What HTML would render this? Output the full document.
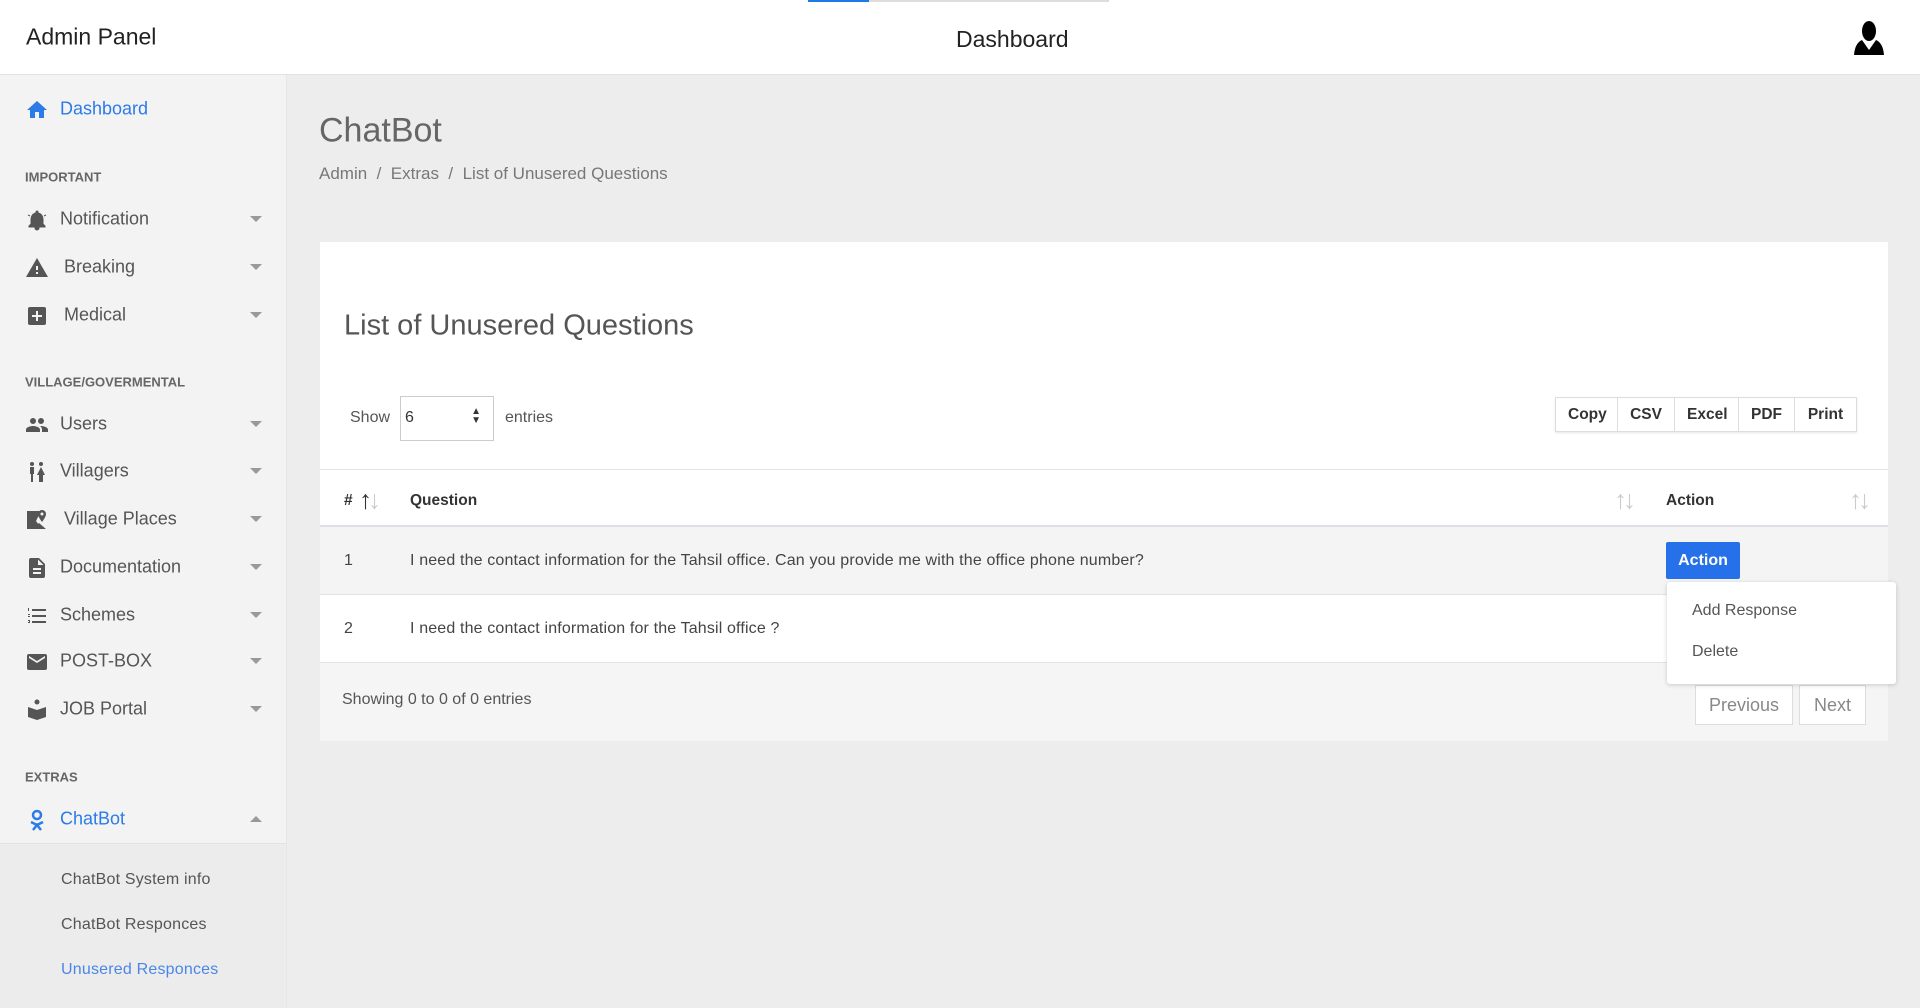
<!DOCTYPE html>
<html><head><meta charset="utf-8"><style>
*{box-sizing:border-box;margin:0;padding:0}
body{width:1920px;height:1008px;overflow:hidden;font-family:"Liberation Sans",sans-serif;background:#ededed;color:#333;position:relative}
.abs{position:absolute}
.hdr{left:0;top:0;width:1920px;height:75px;background:#fff;border-bottom:1px solid #e2e2e2}
.side{left:0;top:75px;width:287px;height:933px;background:#f3f3f3;border-right:1px solid #e6e6e6}
.nav{position:absolute;left:60px;font-size:18px;color:#555;transform:translateY(-50%)}
.ico{position:absolute;left:25px;width:24px;height:24px;transform:translateY(-50%)}
.sec{position:absolute;left:25px;font-size:13px;font-weight:bold;color:#666;transform:translateY(-50%)}
.car{position:absolute;left:250px;width:0;height:0;border-left:6px solid transparent;border-right:6px solid transparent;border-top:6px solid #999;transform:translateY(-50%)}
.sub{position:absolute;left:61px;font-size:16px;color:#555;transform:translateY(-50%);letter-spacing:.2px}
.card{left:320px;top:242px;width:1568px;height:499px;background:#fff}
.btn{display:inline-block;height:35px;line-height:33px;padding:0 12px;border:1px solid #ddd;font-weight:bold;font-size:15.5px;color:#333;text-align:center}
.mid{transform:translateY(-50%)}
.td{position:absolute;font-size:16px;color:#444;transform:translateY(-50%)}
.th{position:absolute;font-size:15.5px;font-weight:bold;color:#333;transform:translateY(-50%)}
.srt{position:absolute;color:#ccc;font-size:26px;transform:translateY(-50%);letter-spacing:-4px}
</style></head><body>
<div class="abs hdr"></div>
<div class="abs" style="left:808px;top:0;width:61px;height:2px;background:#1e7be6"></div>
<div class="abs" style="left:869px;top:0;width:240px;height:2px;background:#ddd"></div>
<div class="abs" style="left:26px;top:37px;font-size:23px;color:#222" ><span class="mid" style="display:block">Admin Panel</span></div>
<div class="abs" style="left:956px;top:26px;font-size:23px;color:#222">Dashboard</div>
<svg class="abs" style="left:1853px;top:20px" width="32" height="38" viewBox="0 0 32 38"><ellipse cx="16" cy="11" rx="7" ry="10" fill="#000"/><path d="M9 20 Q2 23 1 35 L31 35 Q30 23 23 20 L16 30Z" fill="#000"/></svg>

<div class="abs side"></div>
<svg class="ico" style="top:110px" viewBox="0 0 24 24"><path d="M10 20v-6h4v6h5v-8h3L12 3 2 12h3v8z" fill="#2b7be8"/></svg>
<div class="nav" style="top:109px;color:#2b7be8">Dashboard</div>
<div class="sec" style="top:177px">IMPORTANT</div>
<svg class="ico" style="top:220px" viewBox="0 0 24 24"><path d="M12 22a2 2 0 0 0 2-2h-4a2 2 0 0 0 2 2zm6-6v-5c0-3-2-5.5-5-6V4a1 1 0 0 0-2 0v1c-3 .5-5 3-5 6v5l-2 2v1h16v-1z M3 7l2 1M21 7l-2 1" fill="#555" stroke="#555" stroke-width="1"/></svg>
<div class="nav" style="top:219px">Notification</div><div class="car" style="top:219px"></div>
<svg class="ico" style="top:268px" viewBox="0 0 24 24"><path d="M1 21h22L12 2zm12-3h-2v-2h2zm0-4h-2v-4h2z" fill="#555"/></svg>
<div class="nav" style="top:267px;left:64px">Breaking</div><div class="car" style="top:267px"></div>
<svg class="ico" style="top:316px" viewBox="0 0 24 24"><path d="M19 3H5a2 2 0 0 0-2 2v14a2 2 0 0 0 2 2h14a2 2 0 0 0 2-2V5a2 2 0 0 0-2-2zm-2 10h-4v4h-2v-4H7v-2h4V7h2v4h4z" fill="#555"/></svg>
<div class="nav" style="top:315px;left:64px">Medical</div><div class="car" style="top:315px"></div>
<div class="sec" style="top:382px">VILLAGE/GOVERMENTAL</div>
<svg class="ico" style="top:425px" viewBox="0 0 24 24"><path d="M16 11a3 3 0 1 0 0-6 3 3 0 0 0 0 6zm-8 0a3 3 0 1 0 0-6 3 3 0 0 0 0 6zm0 2c-2.3 0-7 1.2-7 3.5V19h14v-2.5C15 14.2 10.3 13 8 13zm8 0h-1c1.2.8 2 2 2 3.5V19h6v-2.5c0-2.3-4.7-3.5-7-3.5z" fill="#555"/></svg>
<div class="nav" style="top:424px">Users</div><div class="car" style="top:424px"></div>
<svg class="ico" style="top:472px" viewBox="0 0 24 24"><circle cx="7" cy="4" r="2" fill="#555"/><circle cx="16" cy="4" r="2" fill="#555"/><path d="M5 7h4v7H8v8H6v-8H5zM16 7l4 8h-2v7h-4v-7h-2z" fill="#555"/></svg>
<div class="nav" style="top:471px">Villagers</div><div class="car" style="top:471px"></div>
<svg class="ico" style="top:520px" viewBox="0 0 24 24"><path d="M2 3h12v4l-3 6 3 4-4 4H2zM17 2a4 4 0 0 1 4 4c0 3-4 8-4 8s-4-5-4-8a4 4 0 0 1 4-4z M8 21l6-6 7 6z" fill="#555"/><circle cx="17" cy="6" r="1.5" fill="#f3f3f3"/></svg>
<div class="nav" style="top:519px;left:64px">Village Places</div><div class="car" style="top:519px"></div>
<svg class="ico" style="top:568px" viewBox="0 0 24 24"><path d="M14 2H6a2 2 0 0 0-2 2v16a2 2 0 0 0 2 2h12a2 2 0 0 0 2-2V8zm2 16H8v-2h8zm0-4H8v-2h8zm-3-5V3.5L18.5 9z" fill="#555"/></svg>
<div class="nav" style="top:567px">Documentation</div><div class="car" style="top:567px"></div>
<svg class="ico" style="top:616px" viewBox="0 0 24 24"><path d="M7 5h14v2H7zm0 6h14v2H7zm0 6h14v2H7zM3 4h1v3H3zm0 6h2v1H3v1h2v1H3zm0 6h2v3H3v-1h1v-1H3z" fill="#555"/></svg>
<div class="nav" style="top:615px">Schemes</div><div class="car" style="top:615px"></div>
<svg class="ico" style="top:662px" viewBox="0 0 24 24"><path d="M20 4H4a2 2 0 0 0-2 2v12a2 2 0 0 0 2 2h16a2 2 0 0 0 2-2V6a2 2 0 0 0-2-2zm0 4-8 5-8-5V6l8 5 8-5z" fill="#555"/></svg>
<div class="nav" style="top:661px">POST-BOX</div><div class="car" style="top:661px"></div>
<svg class="ico" style="top:710px" viewBox="0 0 24 24"><circle cx="12" cy="4" r="2.5" fill="#555"/><path d="M3 9l9 3 9-3v10l-9 3-9-3z" fill="#555"/></svg>
<div class="nav" style="top:709px">JOB Portal</div><div class="car" style="top:709px"></div>
<div class="sec" style="top:777px">EXTRAS</div>
<svg class="ico" style="top:820px" viewBox="0 0 24 24"><circle cx="12" cy="7" r="4" fill="none" stroke="#2b7be8" stroke-width="2.5"/><path d="M6 14l6 3 6-3M8 22l4-5 4 5" fill="none" stroke="#2b7be8" stroke-width="2.5"/></svg>
<div class="nav" style="top:819px;color:#2b7be8">ChatBot</div>
<div class="car" style="top:819px;border-top:none;border-bottom:6px solid #999"></div>
<div class="abs" style="left:0;top:843px;width:286px;height:165px;background:#ececec;border-top:1px solid #e2e2e2"></div>
<div class="sub" style="top:880px">ChatBot System info</div>
<div class="sub" style="top:925px">ChatBot Responces</div>
<div class="sub" style="top:970px;color:#4a86e8">Unusered Responces</div>

<div class="abs" style="left:319px;top:131px;font-size:34px;color:#666"><span class="mid" style="display:block">ChatBot</span></div>
<div class="abs" style="left:319px;top:174px;font-size:17px;color:#777"><span class="mid" style="display:block">Admin &nbsp;/&nbsp; Extras &nbsp;/&nbsp; List of Unusered Questions</span></div>

<div class="abs card"></div>
<div class="abs" style="left:344px;top:326px;font-size:29px;color:#555"><span class="mid" style="display:block">List of Unusered Questions</span></div>
<div class="abs" style="left:350px;top:418px;font-size:16px;color:#555"><span class="mid" style="display:block">Show</span></div>
<div class="abs" style="left:400px;top:396px;width:94px;height:45px;border:1px solid #ccc;font-size:16px;padding:12px 4px;color:#333">6<span style="position:absolute;right:12px;top:10px;font-size:10px;line-height:9px">▲<br>▼</span></div>
<div class="abs" style="left:505px;top:418px;font-size:16px;color:#555"><span class="mid" style="display:block">entries</span></div>
<div class="abs" style="left:1555px;top:397px;display:flex;box-shadow:0 1px 2px rgba(0,0,0,.1)"><div class="btn" style="width:63px">Copy</div><div class="btn" style="width:57px;border-left:none">CSV</div><div class="btn" style="width:64px;border-left:none">Excel</div><div class="btn" style="width:56px;border-left:none">PDF</div><div class="btn" style="width:62px;border-left:none">Print</div></div>

<div class="abs" style="left:320px;top:469px;width:1568px;height:1px;background:#e3e3e3"></div>
<div class="th" style="left:344px;top:501px">#</div>
<div class="srt" style="left:359px;top:500px;color:#333">↑<span style="color:#ccc">↓</span></div>
<div class="th" style="left:410px;top:501px">Question</div>
<div class="srt" style="left:1614px;top:500px">↑↓</div>
<div class="th" style="left:1666px;top:501px">Action</div>
<div class="srt" style="left:1849px;top:500px">↑↓</div>
<div class="abs" style="left:320px;top:525px;width:1568px;height:70px;background:#f4f4f4;border-top:2px solid #dde0e4;border-bottom:1px solid #e3e3e3"></div>
<div class="td" style="left:344px;top:561px">1</div>
<div class="td" style="left:410px;top:561px;letter-spacing:.15px">I need the contact information for the Tahsil office. Can you provide me with the office phone number?</div>
<div class="td" style="left:344px;top:629px">2</div>
<div class="td" style="left:410px;top:629px;letter-spacing:.15px">I need the contact information for the Tahsil office ?</div>
<div class="abs" style="left:320px;top:662px;width:1568px;height:79px;background:#f5f5f5;border-top:1px solid #e3e3e3"></div>
<div class="abs" style="left:342px;top:700px;font-size:16px;color:#555"><span class="mid" style="display:block">Showing 0 to 0 of 0 entries</span></div>
<div class="abs" style="left:1695px;top:685px;width:98px;height:40px;background:#fff;border:1px solid #ddd;font-size:18px;color:#888;text-align:center;line-height:38px">Previous</div>
<div class="abs" style="left:1799px;top:685px;width:67px;height:40px;background:#fff;border:1px solid #ddd;font-size:18px;color:#888;text-align:center;line-height:38px">Next</div>

<div class="abs" style="left:1666px;top:542px;width:74px;height:37px;background:#2670ea;border-radius:2px;color:#fff;font-weight:bold;font-size:16px;text-align:center;line-height:37px">Action</div>
<div class="abs" style="left:1667px;top:582px;width:229px;height:102px;background:#fff;border-radius:3px;box-shadow:0 1px 5px rgba(0,0,0,.18)"></div>
<div class="abs" style="left:1692px;top:611px;font-size:16px;color:#555"><span class="mid" style="display:block">Add Response</span></div>
<div class="abs" style="left:1692px;top:652px;font-size:16px;color:#555"><span class="mid" style="display:block">Delete</span></div>
</body></html>
